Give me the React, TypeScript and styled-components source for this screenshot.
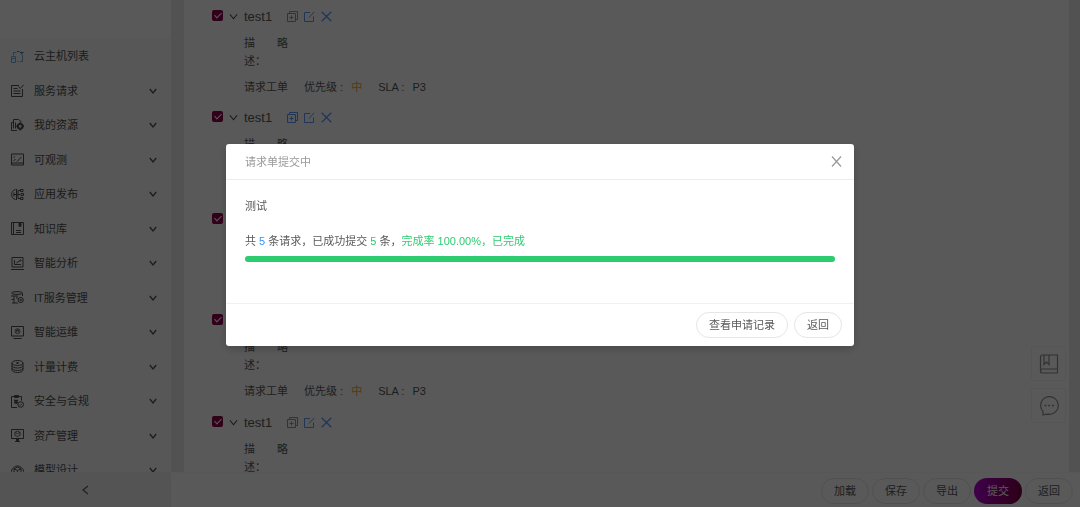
import React from "react";
import styled, { createGlobalStyle, css } from "styled-components";

const GlobalStyle = createGlobalStyle`
  *, *::before, *::after { box-sizing: border-box; }
  body {
    margin: 0;
    font-family: "Liberation Sans", "Noto Sans CJK SC", sans-serif;
    font-size: 11px;
    line-height: 18px;
    color: #595959;
    background: #ececec;
  }
  button { font: inherit; color: inherit; padding: 0; border: 0; background: none; cursor: pointer; }
  a { color: inherit; text-decoration: none; }
  h1, h2, p, ul, dl, dd { margin: 0; padding: 0; font-weight: 400; }
  ul { list-style: none; }
`;

const Page = styled.div`
  height: 100vh;
  display: flex;
  flex-direction: column;
  overflow: hidden;
`;

const Body = styled.div`
  flex: 1;
  min-height: 0;
  display: flex;
`;

const Sidebar = styled.nav`
  width: 171px;
  flex: none;
  padding-top: 38px;
  background: #fff;
  overflow: hidden;
`;

const Menu = styled.ul`
  padding-top: 1px;
  background: #f8f8f8;
`;

const MenuItem = styled.li`
  height: 34px;
  &:nth-child(even) { height: 35px; }
`;

const MenuLink = styled.a`
  height: 100%;
  display: flex;
  align-items: center;
  gap: 10px;
  padding: 0 14px 0 11px;
  color: #505050;
`;

const MenuLabel = styled.span`
  flex: 1;
`;

const Icon = styled.svg<{ $size?: number; $weight?: number }>`
  width: ${(p) => p.$size ?? 13}px;
  height: ${(p) => p.$size ?? 13}px;
  flex: none;
  display: block;
  fill: none;
  stroke: currentColor;
  stroke-width: ${(p) => p.$weight ?? 1.2};
`;

const Panel = styled.main`
  flex: 1;
  margin: 0 11px 0 13px;
  padding: 0 28px;
  background: #fff;
  overflow: hidden;
`;

const Request = styled.article`
  height: 101px;
  &:nth-child(even) { height: 102px; }
`;

const RequestHead = styled.header`
  height: 33px;
  display: flex;
  align-items: center;
  gap: 6px;
`;

const Check = styled.input`
  appearance: none;
  width: 11px;
  height: 11px;
  margin: 0 0 3px;
  flex: none;
  display: grid;
  place-items: center;
  border-radius: 2px;
  background: #8c0048;
  &::after {
    content: "";
    width: 4px;
    height: 7px;
    margin-bottom: 2px;
    border: solid #fff;
    border-width: 0 1px 1px 0;
    transform: rotate(45deg);
  }
`;

const RequestTitle = styled.h2`
  font-size: 13px;
  margin-right: 9px;
`;

const IconButton = styled.button`
  color: #5a9cff;
`;

const ToggleButton = styled.button`
  color: #444;
`;

const RequestBody = styled.div`
  padding-left: 32px;
`;

const Description = styled.dl`
  display: flex;
  gap: 11px;
  padding-top: 1px;
  dt { width: 22px; }
`;

const Meta = styled.p`
  display: flex;
  gap: 16px;
  margin-top: 8px;
`;

const Field = styled.span`
  display: flex;
  gap: 8px;
`;

const Priority = styled.span`
  color: #f0a830;
`;

const Footer = styled.footer`
  height: 35px;
  flex: none;
  display: flex;
  background: #fff;
`;

const Collapse = styled.button`
  width: 171px;
  display: grid;
  place-items: center;
  background: #f0f0f0;
`;

const Actions = styled.div`
  flex: 1;
  display: flex;
  align-items: center;
  justify-content: flex-end;
  gap: 3px;
  padding: 1px 7px 0;
  border-top: 1px solid #f8f8f8;
`;

const Pill = styled.button<{ $primary?: boolean }>`
  height: 26px;
  padding: 0 12px;
  border-radius: 13px;
  border: 1px solid #e6e6e6;
  ${(p) =>
    p.$primary &&
    css`
      border-color: transparent;
      color: #fff;
      background: linear-gradient(100deg, #b800dc, #7a0038) border-box;
    `}
`;

const Tools = styled.aside`
  position: fixed;
  right: 14px;
  bottom: 84px;
  display: grid;
  gap: 7px;
`;

const ToolButton = styled.button`
  width: 35px;
  height: 35px;
  display: grid;
  place-items: center;
  border: 1px solid #f2f2f2;
  border-radius: 3px;
  color: #909090;
  background: #fff;
`;

const Overlay = styled.div`
  position: fixed;
  inset: 0;
  display: flex;
  align-items: flex-start;
  justify-content: center;
  padding: 144px 24px 0;
  background: rgba(0, 0, 0, 0.65);
`;

const Dialog = styled.section`
  width: 100%;
  max-width: 628px;
  border-radius: 3px;
  background: #fff;
  box-shadow: 0 3px 10px rgba(0, 0, 0, 0.2);
`;

const DialogHead = styled.header`
  height: 36px;
  display: flex;
  align-items: center;
  justify-content: space-between;
  padding: 0 12px 0 19px;
  border-bottom: 1px solid #ededed;
  color: #999;
  h1 { font-size: 11px; }
`;

const DialogBody = styled.div`
  padding: 17px 19px 41px;
`;

const Summary = styled.p`
  margin: 17px 0 6px;
`;

const Tint = styled.span<{ $color: string }>`
  color: ${(p) => p.$color};
`;

const Track = styled.div`
  height: 6px;
  border-radius: 3px;
  background: #f0f0f0;
`;

const Bar = styled.div`
  height: 100%;
  border-radius: 3px;
  background: #2ecc71;
`;

const DialogFoot = styled.footer`
  display: flex;
  justify-content: flex-end;
  gap: 6px;
  padding: 8px 12px;
  border-top: 1px solid #f0f0f0;
`;

const Chevron = ({ size = 9, weight = 1.2 }: { size?: number; weight?: number }) => (
  <Icon viewBox="0 0 10 10" $size={size} $weight={weight} aria-hidden>
    <path d="M1 2.500 5 7.500 9 2.500" />
  </Icon>
);

const menu: { label: string; leaf?: boolean; icon: React.ReactNode }[] = [
  {
    label: "云主机列表",
    leaf: true,
    icon: (
      <g stroke="#6fb0e6">
        <path d="M.5 6.500h4v6h-4zM.5 8.500h4M2.500 5.500v-3h3M11.500 4.500v7M6 11.500h1.500M9 11.500h2.500" />
        <path d="M6 1.500h2.500M9 2.500h3.500M10 4.500l1.500-2" stroke="#3b78b8" />
      </g>
    ),
  },
  {
    label: "服务请求",
    icon: <path d="M8 1.500H.5v11h11V5M2.500 4.500h4M2.500 7h7M2.500 9.500h7M7.500 2.500 9.300 4.500 12.700.7" />,
  },
  {
    label: "我的资源",
    icon: (
      <>
        <path d="M6 11.500H.5v-8h2M2.500 9.500v-9h5l2.500 2v1M4.500 3.500v6" />
        <circle cx="9.200" cy="7.300" r="2.400" strokeWidth="2" />
        <path d="M9.200 3.200v1.600M9.200 9.800v1.600M5.200 7.300h1.500M11.700 7.300h1.300" strokeWidth="1.500" />
      </>
    ),
  },
  {
    label: "可观测",
    icon: <path d="M.5 1h12v11H.5zM.5 10h12M2.500 8 4.500 6M6 8.500 10.500 4M2.500 4h1.500" />,
  },
  {
    label: "应用发布",
    icon: (
      <>
        <path d="M4.500 1.500C2 2 .6 4 .6 6.500s1.400 4.500 3.900 5M5.500 1v11M2.500 6.500H9M3 4.500v4M7 6.500v-4h2M7 6.500v4h2" />
        <path d="M9.500 1.500h2.500v2H9.500zM10 5.500h2.500v2H10zM9.500 9.500h2.500v2H9.500z" />
      </>
    ),
  },
  {
    label: "知识库",
    icon: (
      <>
        <path d="M.5.5h12v12H.5zM2.500.5v12M5 8.500h5M5 10.500h5" />
        <path d="M8 1v3.500l1-.8 1 .8V1z" fill="currentColor" />
      </>
    ),
  },
  {
    label: "智能分析",
    icon: (
      <>
        <path d="M1 .5h11v9.500H1zM0 12.500h13M3.500 3v4.500H10M5.500 6 9 3.500" />
        <circle cx="9.500" cy="3.500" r=".6" />
      </>
    ),
  },
  {
    label: "IT服务管理",
    icon: (
      <>
        <ellipse cx="6" cy="2" rx="5.500" ry="1.400" />
        <path d="M11.500 2.500v2.500M0 5h7M3 5v7M.5 8.500h2.500M1 12h6M6 5.500v2.500" />
        <circle cx="9.700" cy="9" r="2.600" />
        <circle cx="9.700" cy="9" r=".8" />
      </>
    ),
  },
  {
    label: "智能运维",
    icon: (
      <>
        <path d="M.5.5h12v9.500H.5zM2.500 12.500h8" />
        <circle cx="6.500" cy="5.200" r="2.500" strokeWidth=".8" />
        <path d="M5 6.700 6.500 3.500 8 6.700M5 4.500h3" strokeWidth=".8" />
      </>
    ),
  },
  {
    label: "计量计费",
    icon: (
      <>
        <ellipse cx="6.500" cy="3" rx="5.500" ry="2.500" />
        <path d="M1 3v7c0 1.400 2.500 2.500 5.500 2.500S12 11.400 12 10V3M1 5.500C1 6.900 3.500 8 6.500 8S12 6.900 12 5.500M1 8c0 1.400 2.500 2.500 5.500 2.500S12 9.400 12 8M5 3h3M6.500 2v2" />
      </>
    ),
  },
  {
    label: "安全与合规",
    icon: (
      <>
        <path d="M6 12.500H.5v-11h10v4M3.500.5h4v2h-4z" />
        <path d="M3 5.500h4M5 7.500h2M3 7.500h1M5 5v4" strokeWidth="1.600" />
        <circle cx="9.700" cy="9.500" r="2.800" />
        <path d="m8.300 9.500 1 1 2-2" strokeWidth=".9" />
      </>
    ),
  },
  {
    label: "资产管理",
    icon: (
      <>
        <path d="M.5.5h12v9H.5zM4 12.500h5" />
        <path d="m6.500 2 2.600 1.300v2.900L6.500 7.600 3.900 6.200V3.300zM3.900 3.300l2.600 1.400 2.600-1.400" strokeWidth=".8" />
        <path d="M5 11h3" strokeWidth="3" />
      </>
    ),
  },
  {
    label: "模型设计",
    icon: (
      <path d="M1.500 11.500A6 6 0 1 1 11.500 11.500M6.500 3 10 4.800v4L6.500 10.500 3 8.800v-4zM3 4.800 6.500 6.500 10 4.800M6.500 6.500v4" />
    ),
  },
];

function RequestRow() {
  return (
    <Request>
      <RequestHead>
        <Check type="checkbox" defaultChecked aria-label="选择 test1" />
        <ToggleButton aria-label="展开">
          <Chevron />
        </ToggleButton>
        <RequestTitle>test1</RequestTitle>
        <IconButton aria-label="复制">
          <Icon viewBox="0 0 11 11" $size={11} $weight={1}>
            <path d="M.5 2.500h8v8h-8zM2.500 2.500v-2h8v8h-2M4.500 4.500v4M2.500 6.500h4" />
          </Icon>
        </IconButton>
        <IconButton aria-label="编辑">
          <Icon viewBox="0 0 11 11" $size={11} $weight={1}>
            <path d="M6 1.500H.5v9h9V5.500M5 6.500 10.300.8" />
          </Icon>
        </IconButton>
        <IconButton aria-label="删除">
          <Icon viewBox="0 0 11 11" $size={11} $weight={1.3}>
            <path d="m.7.7 9.600 9.600M10.300.7.7 10.300" />
          </Icon>
        </IconButton>
      </RequestHead>
      <RequestBody>
        <Description>
          <dt>描述：</dt>
          <dd>略</dd>
        </Description>
        <Meta>
          <span>请求工单</span>
          <Field>
            <span>优先级 :</span>
            <Priority>中</Priority>
          </Field>
          <Field>
            <span>SLA :</span>
            <span>P3</span>
          </Field>
        </Meta>
      </RequestBody>
    </Request>
  );
}

export default function App() {
  const percent = 100;
  return (
    <>
      <GlobalStyle />
      <Page>
        <Body>
          <Sidebar>
            <Menu>
              {menu.map((m) => (
                <MenuItem key={m.label}>
                  <MenuLink href="#">
                    <Icon viewBox="0 0 13 13" $weight={1}>
                      {m.icon}
                    </Icon>
                    <MenuLabel>{m.label}</MenuLabel>
                    {!m.leaf && <Chevron size={8} weight={1.6} />}
                  </MenuLink>
                </MenuItem>
              ))}
            </Menu>
          </Sidebar>
          <Panel>
            {[1, 2, 3, 4, 5].map((n) => (
              <RequestRow key={n} />
            ))}
          </Panel>
        </Body>
        <Footer>
          <Collapse aria-label="收起菜单">
            <Icon viewBox="0 0 10 10" $size={10} $weight={1.2}>
              <path d="M7 1 2 5 7 9" />
            </Icon>
          </Collapse>
          <Actions>
            <Pill>加载</Pill>
            <Pill>保存</Pill>
            <Pill>导出</Pill>
            <Pill $primary>提交</Pill>
            <Pill>返回</Pill>
          </Actions>
        </Footer>
      </Page>
      <Tools>
        <ToolButton aria-label="文档">
          <Icon viewBox="0 0 20 20" $size={20} $weight={1.2}>
            <path d="M18.500 15V1H3.500A2 2 0 0 0 1.500 3v14a2 2 0 0 0 2 2h15M1.500 17a2 2 0 0 1 2-2h15v4M5 1v9.500L7.500 8l2.500 2.500V1" />
          </Icon>
        </ToolButton>
        <ToolButton aria-label="留言">
          <Icon viewBox="0 0 20 20" $size={20} $weight={1.2}>
            <path d="M4 19v-3.500A8.800 8.800 0 1 1 9 18.200c-1.500 0-3 .3-5 .8z" />
            <path d="M5.500 9.500h2M9.200 9.500h2M13 9.500h2" strokeWidth="1.600" />
          </Icon>
        </ToolButton>
      </Tools>
      <Overlay>
        <Dialog role="dialog" aria-modal="true" aria-labelledby="dialog-title">
          <DialogHead>
            <h1 id="dialog-title">请求单提交中</h1>
            <button aria-label="关闭">
              <Icon viewBox="0 0 11 11" $size={11} $weight={1.2}>
                <path d="m1 .5 9 10M10 .5 1 10.500" />
              </Icon>
            </button>
          </DialogHead>
          <DialogBody>
            <p>测试</p>
            <Summary>
              共 <Tint $color="#3296fa">5</Tint> 条请求，已成功提交 <Tint $color="#2ecc71">5</Tint> 条，
              <Tint $color="#2ecc71">完成率 100.00%，已完成</Tint>
            </Summary>
            <Track role="progressbar" aria-valuenow={percent} aria-label="完成率">
              <Bar style={{ width: `${percent}%` }} />
            </Track>
          </DialogBody>
          <DialogFoot>
            <Pill>查看申请记录</Pill>
            <Pill>返回</Pill>
          </DialogFoot>
        </Dialog>
      </Overlay>
    </>
  );
}
